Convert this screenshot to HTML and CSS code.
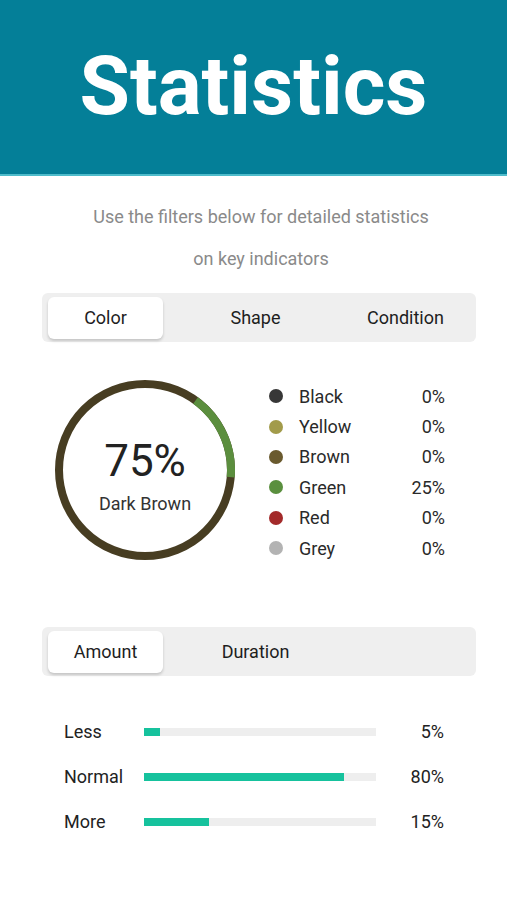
FILE: index.html
```html
<!DOCTYPE html>
<html>
<head>
<meta charset="utf-8">
<link rel="stylesheet" href="styles.css">
</head>
<body>
<header class="hero"><h1>Statistics</h1></header>
<p class="intro">Use the filters below for detailed statistics<br>on key indicators</p>

<div class="seg seg-top">
  <div class="tab active">Color</div>
  <div class="tab">Shape</div>
  <div class="tab">Condition</div>
</div>

<section class="color-stats">
  <div class="donut">
    <svg width="180" height="180" viewBox="0 0 180 180">
      <circle cx="90" cy="90" r="86" fill="none" stroke="#473d22" stroke-width="8"/>
      <circle cx="90" cy="90" r="86" fill="none" stroke="#5b8e3e" stroke-width="8"
        stroke-dasharray="88 452" transform="rotate(-54 90 90)"/>
    </svg>
    <div class="donut-text">
      <div class="pct">75%</div>
      <div class="name">Dark Brown</div>
    </div>
  </div>
  <ul class="legend">
    <li><span class="dot" style="background:#373737"></span><span class="lbl">Black</span><span class="val">0%</span></li>
    <li><span class="dot" style="background:#a29b4a"></span><span class="lbl">Yellow</span><span class="val">0%</span></li>
    <li><span class="dot" style="background:#6a5a2e"></span><span class="lbl">Brown</span><span class="val">0%</span></li>
    <li><span class="dot" style="background:#5a8f3e"></span><span class="lbl">Green</span><span class="val">25%</span></li>
    <li><span class="dot" style="background:#a32a2a"></span><span class="lbl">Red</span><span class="val">0%</span></li>
    <li><span class="dot" style="background:#b3b3b3"></span><span class="lbl">Grey</span><span class="val">0%</span></li>
  </ul>
</section>

<div class="seg seg-bottom">
  <div class="tab active">Amount</div>
  <div class="tab">Duration</div>
</div>

<section class="bars">
  <div class="bar-row"><span class="bar-lbl">Less</span><div class="track"><div class="fill" style="width:7%"></div></div><span class="bar-val">5%</span></div>
  <div class="bar-row"><span class="bar-lbl">Normal</span><div class="track"><div class="fill" style="width:86%"></div></div><span class="bar-val">80%</span></div>
  <div class="bar-row"><span class="bar-lbl">More</span><div class="track"><div class="fill" style="width:28%"></div></div><span class="bar-val">15%</span></div>
</section>
</body>
</html>
```
FILE: styles.css
```css
* { box-sizing: border-box; }
body {
  margin: 0;
  font-family: Roboto, "Liberation Sans", sans-serif;
  color: #222;
  background: #fff;
}
.hero {
  height: 176px;
  background: #047f98;
  border-bottom: 2px solid #4fbccb;
  display: flex;
  align-items: center;
  justify-content: center;
}
.hero h1 {
  margin: 0;
  color: #fff;
  font-size: 82px;
  font-weight: 700;
  letter-spacing: 0;
  line-height: 1;
  padding-bottom: 2px;
}
.intro {
  margin: 20px 0 0;
  padding-left: 15px;
  text-align: center;
  color: #8a8a8a;
  font-size: 18px;
  line-height: 42px;
  letter-spacing: 0;
}
.seg {
  margin: 13px 31px 0 42px;
  height: 49px;
  background: #efefef;
  border-radius: 6px;
  display: flex;
  align-items: center;
  gap: 35px;
  padding: 0 6px;
}
.tab {
  width: 115px;
  height: 42px;
  display: flex;
  align-items: center;
  justify-content: center;
  font-size: 18px;
  color: #1e1e1e;
}
.tab.active {
  background: #fff;
  border-radius: 6px;
  box-shadow: 0 2px 3px rgba(0,0,0,0.18);
}
.color-stats {
  display: flex;
  align-items: flex-start;
  margin-top: 38px;
  padding-left: 55px;
}
.donut {
  position: relative;
  width: 180px;
  height: 180px;
}
.donut svg { display: block; }
.donut-text {
  position: absolute;
  inset: 0;
  display: flex;
  flex-direction: column;
  align-items: center;
  justify-content: center;
}
.pct {
  font-size: 44px;
  line-height: 48px;
  color: #222;
  margin-top: 12px;
}
.name {
  font-size: 18px;
  line-height: 24px;
  color: #333;
  margin-top: 7px;
}
.legend {
  list-style: none;
  margin: 1px 0 0 34px;
  padding: 0;
  width: 176px;
}
.legend li {
  display: flex;
  align-items: center;
  height: 30.4px;
  font-size: 18px;
  color: #2a2a2a;
}
.dot {
  width: 14px;
  height: 14px;
  border-radius: 50%;
  flex: none;
}
.lbl { margin-left: 16px; flex: 1; }
.val { text-align: right; }
.seg-bottom { margin-top: 64px; }
.bars {
  margin-top: 33px;
  padding: 0 63px 0 64px;
}
.bar-row {
  display: flex;
  align-items: center;
  height: 45px;
  font-size: 18px;
  color: #222;
}
.bar-lbl { width: 80px; }
.track {
  width: 232px;
  height: 8px;
  background: #eeeeee;
}
.fill {
  height: 100%;
  background: #16c29d;
}
.bar-val { flex: 1; text-align: right; }
```
